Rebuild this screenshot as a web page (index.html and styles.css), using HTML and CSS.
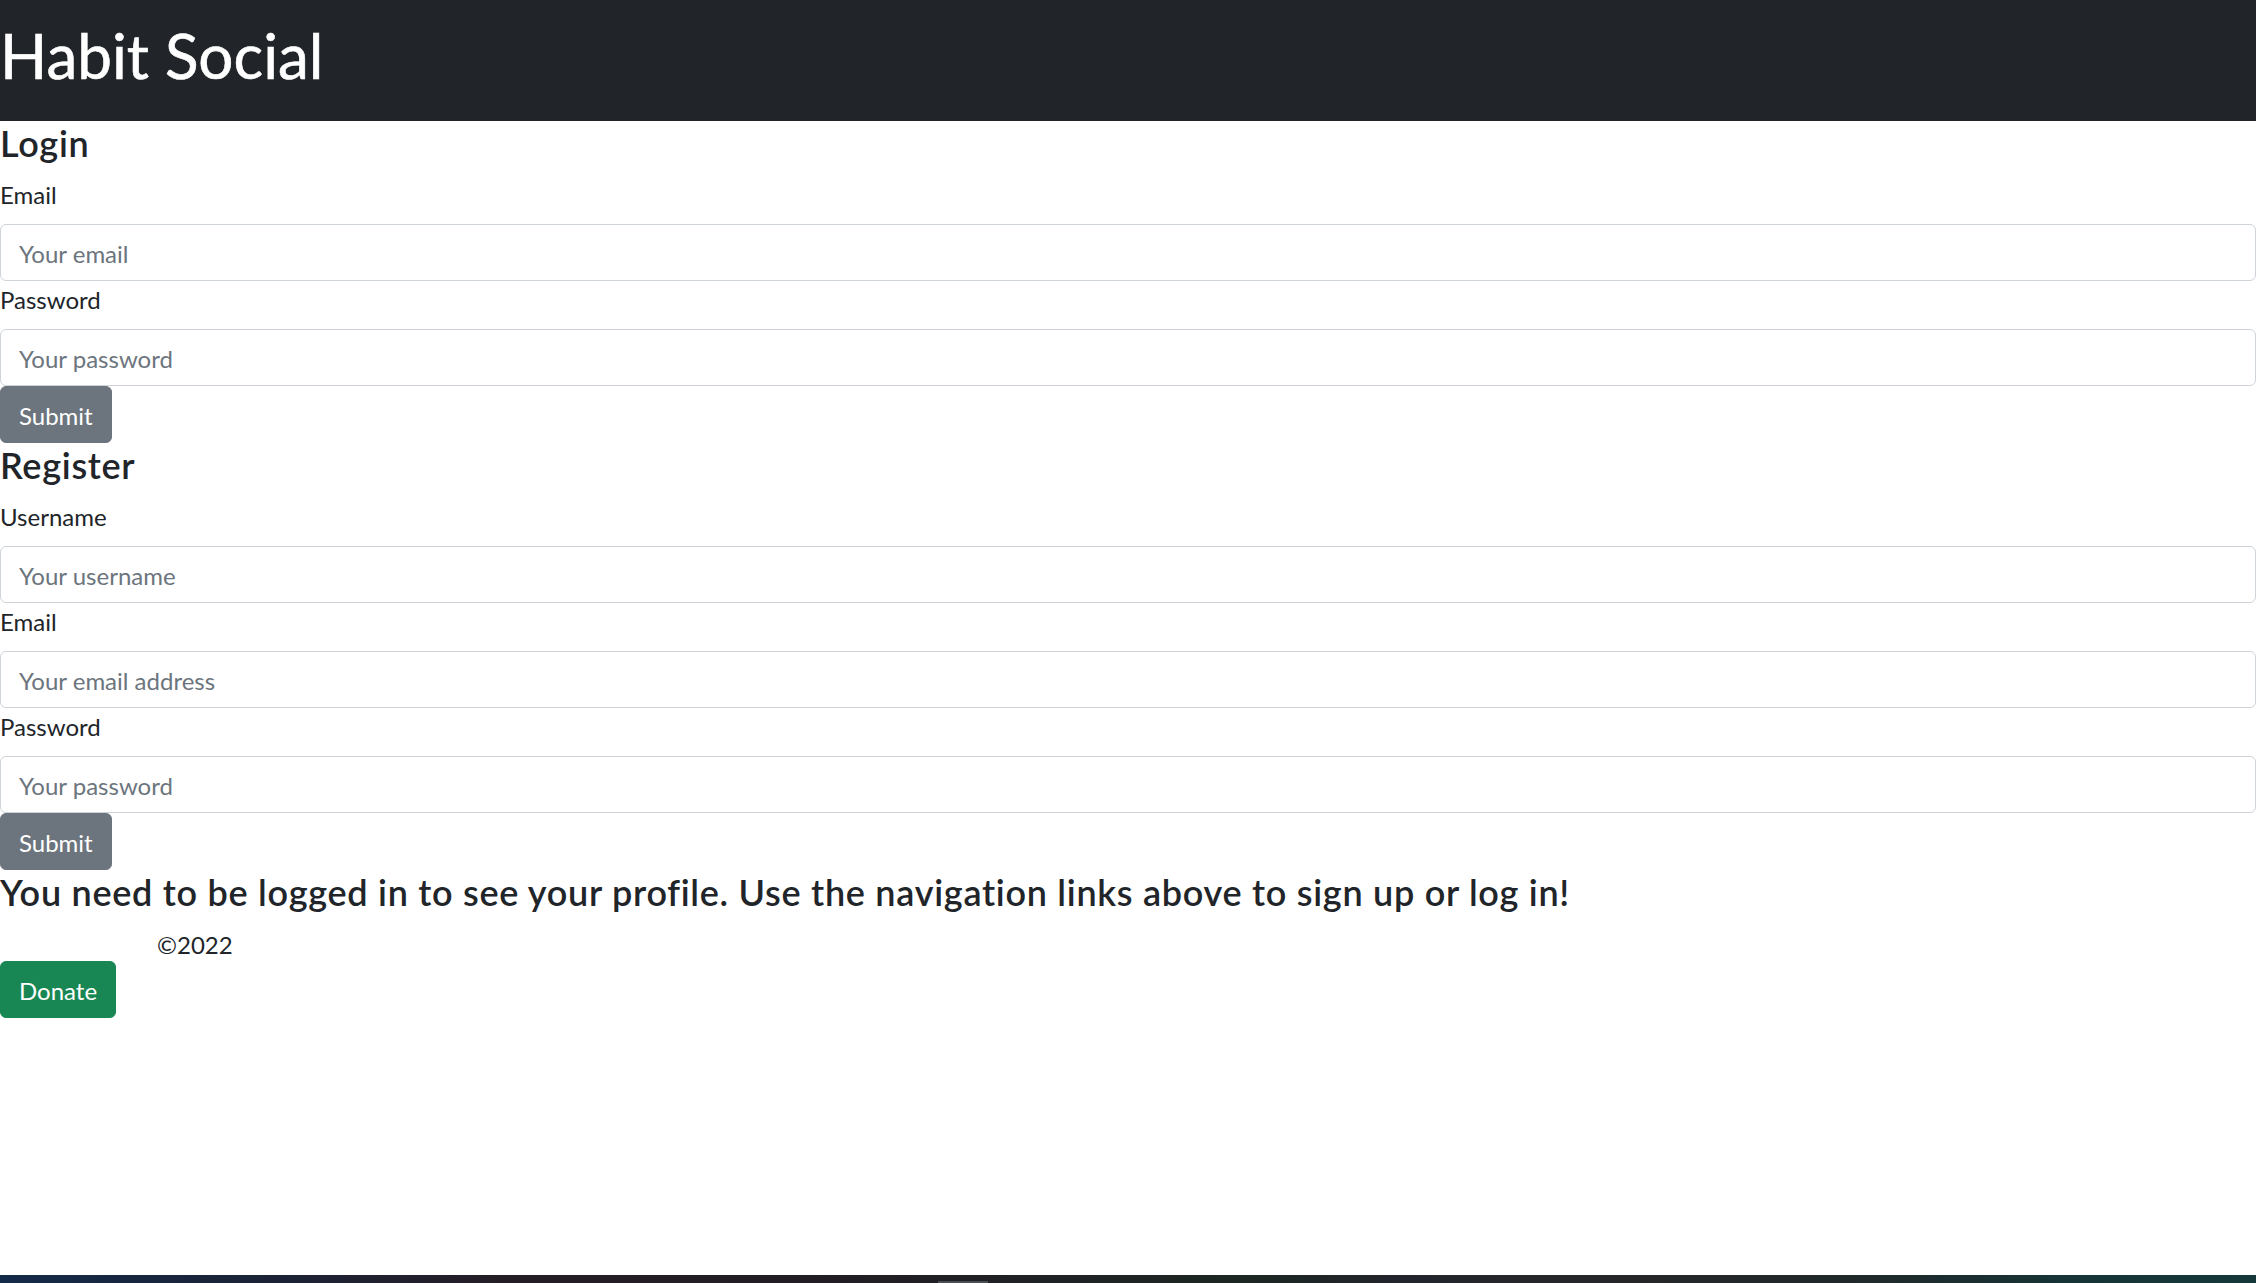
FILE: index.html
```html
<!DOCTYPE html>
<html lang="en">
<head>
<meta charset="utf-8">
<title>Habit Social</title>
<link rel="stylesheet" href="styles.css">
</head>
<body>
<div class="page">
  <header class="site-header">
    <h1 class="brand">Habit Social</h1>
  </header>
  <main class="content">
    <section class="form-block">
      <h4 class="heading">Login</h4>
      <form class="form">
        <label class="form-label">Email</label>
        <input class="form-control" type="email" placeholder="Your email">
        <label class="form-label">Password</label>
        <input class="form-control" type="password" placeholder="Your password">
        <button class="btn btn-secondary" type="button">Submit</button>
      </form>
    </section>
    <section class="form-block">
      <h4 class="heading">Register</h4>
      <form class="form">
        <label class="form-label">Username</label>
        <input class="form-control" type="text" placeholder="Your username">
        <label class="form-label">Email</label>
        <input class="form-control" type="email" placeholder="Your email address">
        <label class="form-label">Password</label>
        <input class="form-control" type="password" placeholder="Your password">
        <button class="btn btn-secondary" type="button">Submit</button>
      </form>
    </section>
    <h4 class="heading notice">You need to be logged in to see your profile. Use the navigation links above to sign up or log in!</h4>
    <footer class="site-footer">
      <p class="copyright">©2022</p>
      <button class="btn btn-success" type="button">Donate</button>
    </footer>
  </main>
  <div class="taskbar-edge"><span class="taskbar-mark"></span></div>
</div>
</body>
</html>
```
FILE: styles.css
```css
html, body {
  margin: 0;
  padding: 0;
}
body {
  font-family: "Lato", "Liberation Sans", sans-serif;
  font-size: 24px;
  line-height: 36px;
  color: #212529;
  background: #ffffff;
}
.page {
  min-height: 100vh;
  display: flex;
  flex-direction: column;
}
.site-header {
  background: #212529;
  height: 121px;
  box-sizing: border-box;
  padding-top: 19px;
}
.brand {
  margin: 0;
  color: #ffffff;
  font-size: 62px;
  line-height: 72px;
  font-weight: 400;
  -webkit-text-stroke: 0.6px #ffffff;
}
.content {
  flex: 1;
}
.form {
  display: flex;
  flex-direction: column;
  align-items: flex-start;
  margin: 0;
}
.heading {
  margin: 0 0 12px 0;
  padding-top: 2px;
  font-size: 36px;
  line-height: 41px;
  font-weight: 600;
  letter-spacing: 0.7px;
}
.notice {
  letter-spacing: 0.72px;
}
.form-label {
  display: block;
  margin-bottom: 12px;
  padding-top: 1px;
  height: 35px;
}
.form-control {
  display: block;
  width: 100%;
  box-sizing: border-box;
  height: 57px;
  padding: 2px 18px 0;
  font-family: inherit;
  font-size: 24px;
  color: #212529;
  background: #fff;
  border: 1px solid #ced4da;
  border-radius: 6px;
  outline: none;
}
.form-control::placeholder {
  color: #6c757d;
  opacity: 1;
}
.btn {
  display: inline-block;
  height: 57px;
  box-sizing: border-box;
  padding: 2px 18px 0;
  border: 1px solid transparent;
  border-radius: 6px;
  font-family: inherit;
  font-size: 24px;
  line-height: 36px;
  color: #fff;
  cursor: pointer;
}
.btn-secondary {
  background: #6c757d;
  border-color: #6c757d;
}
.btn-success {
  background: #198754;
  border-color: #198754;
}
.site-footer {
  display: flex;
  flex-direction: column;
  align-items: flex-start;
}
.copyright {
  margin: 0;
  padding-top: 2px;
  height: 34px;
  padding-left: 157px;
}
.taskbar-edge {
  height: 8px;
  position: relative;
  background: linear-gradient(90deg, #132a48 0%, #1b2236 12%, #241d26 22%, #221c24 35%, #1e2224 48%, #1c2622 55%, #22252c 62%, #252628 72%, #20282a 82%, #163436 92%, #15383a 100%);
}
.taskbar-mark {
  position: absolute;
  left: 938px;
  bottom: 0;
  width: 50px;
  height: 2px;
  background: #4a4d52;
}
```
